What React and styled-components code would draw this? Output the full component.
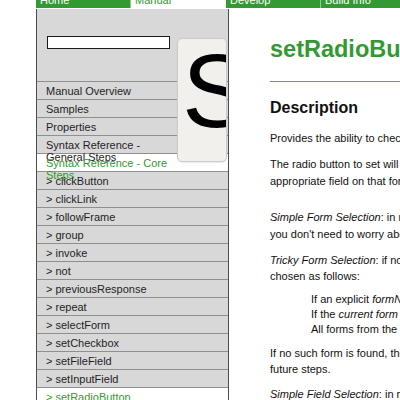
import React from 'react';
import styled, { createGlobalStyle } from 'styled-components';

const GREEN = '#339933';

const GlobalStyle = createGlobalStyle`
  html, body {
    margin: 0;
    padding: 0;
    overflow: hidden;
    background: #fff;
  }
  body {
    font-family: "Liberation Sans", Arial, sans-serif;
    color: #111;
  }
`;

const navTabs = [
  { label: 'Home' },
  { label: 'Manual', active: true },
  { label: 'Develop' },
  { label: 'Build Info' }
];

const menuItems = [
  { label: 'Manual Overview' },
  { label: 'Samples' },
  { label: 'Properties' },
  { label: 'Syntax Reference - General Steps' },
  { label: 'Syntax Reference - Core Steps', active: true },
  { label: '> clickButton' },
  { label: '> clickLink' },
  { label: '> followFrame' },
  { label: '> group' },
  { label: '> invoke' },
  { label: '> not' },
  { label: '> previousResponse' },
  { label: '> repeat' },
  { label: '> selectForm' },
  { label: '> setCheckbox' },
  { label: '> setFileField' },
  { label: '> setInputField' },
  { label: '> setRadioButton', active: true },
  { label: '> setSelectField' }
];

function App() {
  return (
    <>
      <GlobalStyle />
      <Page>
        <Nav>
          {navTabs.map((tab) => (
            <NavTab key={tab.label} $active={tab.active}>
              {tab.label}
            </NavTab>
          ))}
        </Nav>
        <Layout>
          <Sidebar>
            <SearchArea>
              <SearchInput type="text" />
            </SearchArea>
            <Menu>
              {menuItems.map((item) => (
                <MenuItem key={item.label} $active={item.active}>
                  {item.label}
                </MenuItem>
              ))}
            </Menu>
            <Magnifier>
              <BigLetter>S</BigLetter>
            </Magnifier>
          </Sidebar>
          <Main>
            <Title>setRadioButton</Title>
            <Rule />
            <SectionTitle>Description</SectionTitle>
            <Para>Provides the ability to check a radio button.</Para>
            <Para $gap="20px">
              The radio button to set will be found by first locating the relevant form and then the
              <br />
              appropriate field on that form.
            </Para>
            <Para>
              <em>Simple Form Selection</em>: in most cases there will be only one form on the page, so
              <br />
              you don't need to worry about form selection.
            </Para>
            <Para $gap="7.5px">
              <em>Tricky Form Selection</em>: if no form has been explicitly nominated, the form will be
              <br />
              chosen as follows:
            </Para>
            <RuleList>
              <li>
                If an explicit <em>formName</em> is given, that form is used.
              </li>
              <li>
                If the <em>current form</em> contains a matching field, it is used.
              </li>
              <li>All forms from the last response are searched in order.</li>
            </RuleList>
            <Para $gap="8.5px">
              If no such form is found, the step fails. Otherwise the form becomes the current form for
              <br />
              future steps.
            </Para>
            <Para>
              <em>Simple Field Selection</em>: in most cases the field name is unique within the form.
            </Para>
          </Main>
        </Layout>
      </Page>
    </>
  );
}

const Page = styled.div`
  margin-top: -10px;
  display: flex;
  flex-direction: column;
`;

const Nav = styled.nav`
  height: 18px;
  margin-left: 36px;
  display: flex;
  overflow: hidden;
  background-color: ${GREEN};
`;

const NavTab = styled.div`
  flex: none;
  width: 95px;
  padding-left: 4px;
  box-sizing: border-box;
  border-right: 1px solid rgba(255, 255, 255, 0.45);
  font-size: 11px;
  line-height: 20px;
  white-space: nowrap;
  color: ${(p) => (p.$active ? GREEN : '#fff')};
  background-color: ${(p) => (p.$active ? '#fff' : GREEN)};
`;

const Layout = styled.div`
  display: flex;
  margin-top: 1px;
  margin-left: 36px;
`;

const Sidebar = styled.aside`
  position: relative;
  flex: none;
  width: 193px;
  box-sizing: border-box;
  border-left: 1px solid #4d4d4d;
  border-right: 1px solid #4d4d4d;
  background-color: #d8d8d8;
`;

const SearchArea = styled.div`
  height: 72px;
  box-sizing: border-box;
  padding: 27px 0 0 10px;
`;

const SearchInput = styled.input`
  display: block;
  width: 123px;
  height: 13px;
  box-sizing: border-box;
  margin: 0;
  padding: 0;
  border: 1px solid #1a1a1a;
  background: #fff;
`;

const Menu = styled.ul`
  list-style: none;
  margin: 0;
  padding: 0;
`;

const MenuItem = styled.li`
  height: 18px;
  box-sizing: border-box;
  padding: 3px 54px 0 9px;
  border-top: 1px solid #8f8f8f;
  font-size: 11px;
  line-height: 12px;
  color: ${(p) => (p.$active ? GREEN : '#1e1e1e')};
  background-color: ${(p) => (p.$active ? '#fff' : 'transparent')};
`;

const Magnifier = styled.div`
  position: absolute;
  left: 140px;
  top: 29px;
  width: 50px;
  height: 124px;
  box-sizing: border-box;
  overflow: hidden;
  border: 1px solid #cdcbc7;
  border-radius: 5px;
  background-color: #f2f0ed;
  box-shadow: 0 1px 1px rgba(0, 0, 0, 0.08);
`;

const BigLetter = styled.span`
  display: block;
  padding-left: 4px;
  font-family: "Liberation Sans", Arial, sans-serif;
  font-weight: normal;
  font-size: 104px;
  line-height: 1;
  color: #000;
`;

const Main = styled.main`
  flex: none;
  width: 640px;
  padding-left: 41px;
  white-space: nowrap;
`;

const Title = styled.h1`
  margin: 26px 0 0;
  font-size: 23.5px;
  line-height: 28px;
  font-weight: bold;
  color: ${GREEN};
`;

const Rule = styled.hr`
  margin: 18px 0 0;
  height: 0;
  border: 0;
  border-top: 1px solid #55a855;
`;

const SectionTitle = styled.h2`
  margin: 16px 0 12px;
  font-size: 16px;
  line-height: 20px;
  font-weight: bold;
  color: #111;
`;

const Para = styled.p`
  margin: 0 0 ${(p) => p.$gap || '9.5px'};
  font-size: 11px;
  line-height: 16.5px;
  color: #111;
`;

const RuleList = styled.ul`
  list-style: none;
  margin: 0 0 7.5px;
  padding-left: 41px;
  font-size: 11px;
  line-height: 15px;
  color: #111;
`;

export default App;
